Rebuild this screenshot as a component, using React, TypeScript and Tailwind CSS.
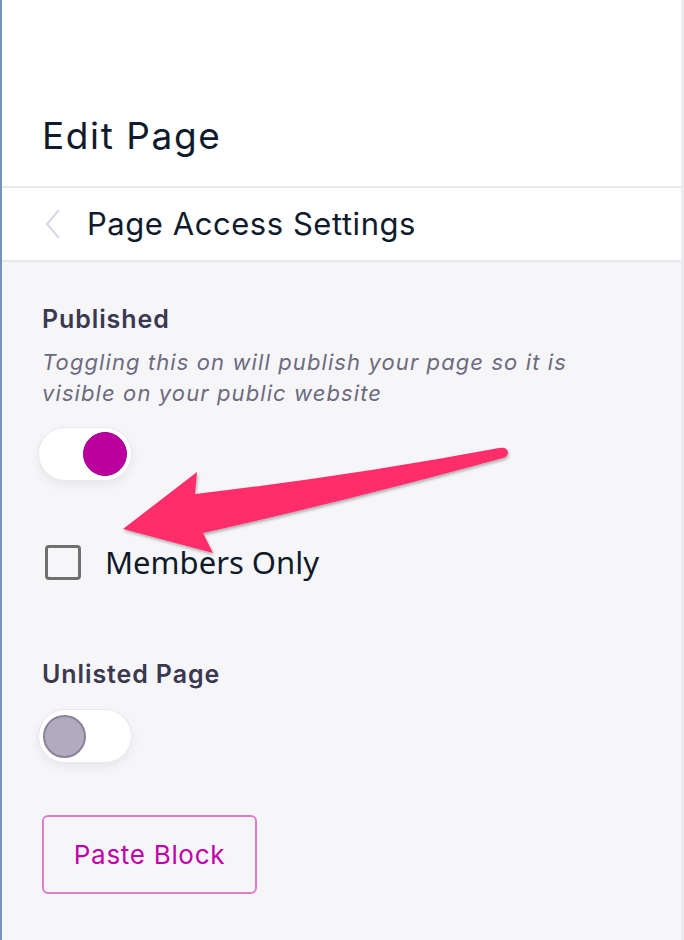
import React from "react";

function Arrow() {
  return (
    <svg
      className="absolute left-0 top-0 pointer-events-none"
      width="684"
      height="940"
      viewBox="0 0 684 940"
    >
      <defs>
        <filter id="sh" x="-10%" y="-30%" width="120%" height="160%">
          <feDropShadow dx="1" dy="2" stdDeviation="1.5" floodColor="#000" floodOpacity="0.3" />
        </filter>
      </defs>
      <path
        d="M123 529 L197 472 L195 494 Q350 476 499 448 Q508 447 508 453 Q507 457 503 458 Q350 500 203 533 L213 553 Z"
        fill="#ff2d6a"
        filter="url(#sh)"
      />
    </svg>
  );
}

function Toggle({ on }: { on: boolean }) {
  return (
    <div
      className={`w-[94px] h-[54px] rounded-full bg-white border border-[#e9e7ef] shadow-[0_4px_10px_rgba(40,30,60,0.07)] flex items-center px-[4px] ${
        on ? "justify-end" : "justify-start"
      }`}
    >
      {on ? (
        <div className="w-[44px] h-[44px] rounded-full bg-[#bb00a0] border border-[#9c0086]" />
      ) : (
        <div className="w-[43px] h-[43px] rounded-full bg-[#b2aabe] border-2 border-[#8b8397]" />
      )}
    </div>
  );
}

export default function App() {
  return (
    <div
      className="relative w-[684px] h-[940px] flex bg-[#f6f6f8] overflow-hidden"
      style={{ fontFamily: "Inter, 'Noto Sans', sans-serif" }}
    >
      <div className="flex-1 flex flex-col border-l-2 border-[#7394bb]">
        <div className="bg-white h-[186px] pt-[114px] pl-[40px]">
          <div className="text-[37px] leading-[44px] tracking-[1.6px] text-[#0f1b2d]">Edit Page</div>
        </div>
        <div className="h-[2px] bg-[#e9e8ef]" />
        <div className="bg-white h-[72px] flex items-center pl-[43px]">
          <svg width="16" height="30" viewBox="0 0 16 30" className="mr-[26px]">
            <path d="M14 1 L2 15 L14 29" fill="none" stroke="#d8d6e6" strokeWidth="2" />
          </svg>
          <div className="text-[31px] leading-[40px] tracking-[0.55px] text-[#0f1b2d]">Page Access Settings</div>
        </div>
        <div className="h-[2px] bg-[#e9e8ef]" />
        <div className="flex flex-col items-start pl-[40px] pt-[41px]">
          <div className="text-[25px] leading-[32px] font-semibold tracking-[0.9px] text-[#3b3950]">Published</div>
          <div className="mt-[12px] text-[22px] leading-[31px] italic tracking-[1.1px] text-[#6d6a80] w-[570px]">
            Toggling this on will publish your page so it is visible on your public website
          </div>
          <div className="mt-[18px] -ml-[4px]">
            <Toggle on={true} />
          </div>
          <div className="mt-[61px] h-[40px] flex items-center">
            <div className="ml-[3px] w-[36px] h-[35px] border-[3px] border-[#707070] rounded-[4px]" />
            <div
              className="ml-[24px] text-[31px] leading-[40px] text-[#0e1a2b]"
              style={{ fontFamily: "'Noto Sans', sans-serif" }}
            >
              Members Only
            </div>
          </div>
          <div className="mt-[76px] text-[25px] leading-[32px] font-semibold tracking-[0.9px] text-[#3b3950]">Unlisted Page</div>
          <div className="mt-[19px] -ml-[4px]">
            <Toggle on={false} />
          </div>
          <button className="mt-[52px] w-[215px] h-[79px] border-2 border-[#e07bd0] rounded-[6px] text-[26px] tracking-[0.7px] text-[#c000a8] flex items-center justify-center">
            Paste Block
          </button>
        </div>
      </div>
      <div className="w-[3px] bg-[#ececef]" />
      <Arrow />
    </div>
  );
}
